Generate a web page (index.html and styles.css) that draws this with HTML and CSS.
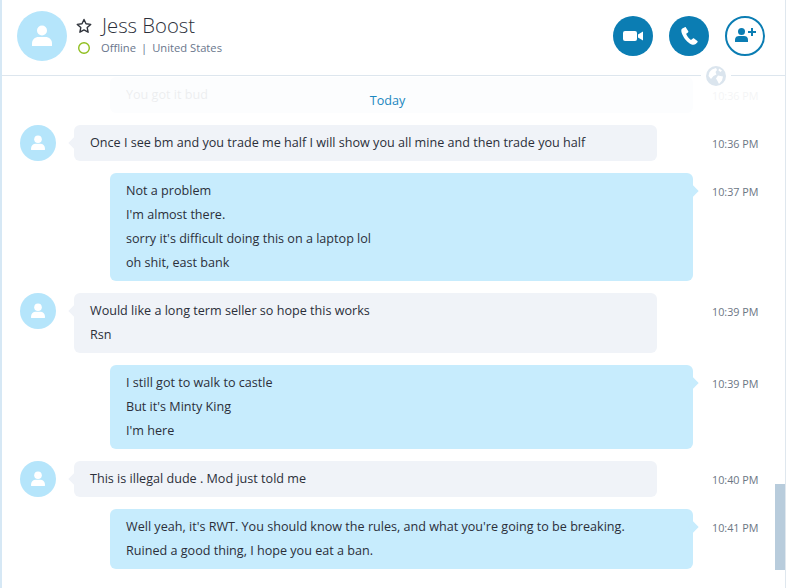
FILE: index.html
```html
<!DOCTYPE html>
<html lang="en">
<head>
    <meta charset="UTF-8">
    <meta name="viewport" content="width=device-width, initial-scale=1.0">
    <title>Jess Boost</title>
    <link rel="stylesheet" href="styles.css">
</head>
<body>
    <div class="window">
        <div class="top">
            <div class="bigAvatar">
                <svg width="26" height="26" viewBox="0 0 26 26"><circle cx="13" cy="7.500" r="5" fill="#fff"/><path d="M3 23v-2.500c0-4 3-6.500 6.500-6.500h7c3.500 0 6.500 2.500 6.500 6.500V23z" fill="#fff"/></svg>
            </div>
            <div class="who">
                <div class="nameLine">
                    <svg class="star" width="16" height="15" viewBox="0 0 16 15"><path d="M8 1.500l2 4.300 4.700.6-3.500 3.200.9 4.600L8 11.900l-4.100 2.300.9-4.600L1.300 6.400 6 5.800z" fill="none" stroke="#30343c" stroke-width="1.400" stroke-linejoin="round"/></svg>
                    <span class="name">Jess Boost</span>
                </div>
                <div class="statusLine">
                    <svg class="ring" width="12" height="12" viewBox="0 0 12 12"><circle cx="6" cy="6" r="5.300" fill="none" stroke="#8fbe1e" stroke-width="1.400"/></svg>
                    <span>Offline</span><span class="sep">|</span><span>United States</span>
                </div>
            </div>
            <div class="btns">
                <div class="btn">
                    <svg width="20" height="10" viewBox="0 0 20 10"><rect x="0" y="0" width="14" height="10" rx="2" fill="#fff"/><path d="M15 3.500L20 .5v9l-5-3z" fill="#fff"/></svg>
                </div>
                <div class="btn">
                    <svg width="20" height="20" viewBox="0 0 20 20"><path d="M5.800 1.200L3.300 2.400C1.900 3.200 2 5.500 3.200 8.200c1.900 4.300 5.400 8.400 8.800 10 1.900.9 3.500.8 4.700-.2l1.800-1.800c.3-.4.300-.9-.1-1.200l-3.300-2.500c-.4-.3-.8-.3-1.200 0l-1.500 1.200c-.3.2-.6.200-.9 0-1.800-1.300-3.300-3.300-4.200-5.400-.1-.3 0-.6.200-.8l1.500-1.100c.4-.3.500-.7.300-1.100L6.900 1.600c-.2-.5-.7-.6-1.100-.4z" fill="#fff"/></svg>
                </div>
                <div class="btn line">
                    <svg width="26" height="20" viewBox="0 0 26 20"><circle cx="9.500" cy="5.500" r="3.500" fill="#0b7db3"/><path d="M3 16v-2.500C3 11 5 10 7 10h5c2 0 4 1 4 3.500V16z" fill="#0b7db3"/><path d="M20 2v8M16 6h8" stroke="#0b7db3" stroke-width="2" fill="none"/></svg>
                </div>
            </div>
        </div>

        <div class="chat">
            <div class="today">Today</div>
            <div class="globe">
                <svg width="20" height="20" viewBox="0 0 20 20"><circle cx="10" cy="10" r="10" fill="#dbe5ee"/><path d="M6 3.500l4-1.500 1 2-1.500 2 1 2.500-3 1.500-2.500 3-2.500-3 1-4zM12 9.500l5 1-1 4-3 3.500-1.500-3-1.500-2.500zM13 2.500l3 2-1.500 1.500-2-1.500z" fill="#fff"/></svg>
            </div>

            <div class="row faded">
                <div class="bubble out">
                    <p>You got it bud</p>
                </div>
                <div class="time">10:36 PM</div>
            </div>

            <div class="row">
                <div class="avatar">
                    <svg width="18" height="18" viewBox="0 0 26 26"><circle cx="13" cy="7.500" r="5.500" fill="#fff"/><path d="M3 23v-2.500c0-4 3-6.500 6.500-6.500h7c3.500 0 6.500 2.500 6.500 6.500V23z" fill="#fff"/></svg>
                </div>
                <div class="bubble in">
                    <p>Once I see bm and you trade me half I will show you all mine and then trade you half</p>
                </div>
                <div class="time">10:36 PM</div>
            </div>

            <div class="row">
                <div class="bubble out">
                    <p>Not a problem</p>
                    <p>I'm almost there.</p>
                    <p>sorry it's difficult doing this on a laptop lol</p>
                    <p>oh shit, east bank</p>
                </div>
                <div class="time">10:37 PM</div>
            </div>

            <div class="row">
                <div class="avatar">
                    <svg width="18" height="18" viewBox="0 0 26 26"><circle cx="13" cy="7.500" r="5.500" fill="#fff"/><path d="M3 23v-2.500c0-4 3-6.500 6.500-6.500h7c3.500 0 6.500 2.500 6.500 6.500V23z" fill="#fff"/></svg>
                </div>
                <div class="bubble in">
                    <p>Would like a long term seller so hope this works</p>
                    <p>Rsn</p>
                </div>
                <div class="time">10:39 PM</div>
            </div>

            <div class="row">
                <div class="bubble out">
                    <p>I still got to walk to castle</p>
                    <p>But it's Minty King</p>
                    <p>I'm here</p>
                </div>
                <div class="time">10:39 PM</div>
            </div>

            <div class="row">
                <div class="avatar">
                    <svg width="18" height="18" viewBox="0 0 26 26"><circle cx="13" cy="7.500" r="5.500" fill="#fff"/><path d="M3 23v-2.500c0-4 3-6.500 6.500-6.500h7c3.500 0 6.500 2.500 6.500 6.500V23z" fill="#fff"/></svg>
                </div>
                <div class="bubble in">
                    <p>This is illegal dude . Mod just told me</p>
                </div>
                <div class="time">10:40 PM</div>
            </div>

            <div class="row">
                <div class="bubble out">
                    <p>Well yeah, it's RWT. You should know the rules, and what you're going to be breaking.</p>
                    <p>Ruined a good thing, I hope you eat a ban.</p>
                </div>
                <div class="time">10:41 PM</div>
            </div>

            <div class="thumb"></div>
        </div>
    </div>
</body>
</html>
```

FILE: styles.css
```css
*{
    padding:0;
    margin:0;
    box-sizing:border-box;
}
html,body{
    height:100%;
    background-color:#fff;
}
body{
    font-family:"Open Sans","Noto Sans",sans-serif;
    font-size:12.6px;
    color:#2b2f3a;
}
.window{
    width:786px;
    height:588px;
    border-left:2px solid #d6e8f5;
    border-right:1px solid #dfe7ee;
    overflow:hidden;
}

/* header */
.top{
    height:76px;
    display:flex;
    align-items:flex-start;
    border-bottom:1px solid #dde6ee;
    padding:10px 20px 0 15px;
}
.bigAvatar{
    width:50px;
    height:50px;
    margin-top:1px;
    border-radius:50%;
    background-color:#b5e5fb;
    display:flex;
    align-items:center;
    justify-content:center;
}
.who{
    margin-left:9px;
}
.nameLine{
    display:flex;
    align-items:center;
    height:30px;
}
.star{
    margin-right:10px;
}
.name{
    font-size:20.3px;
    font-weight:300;
    color:#2b2f3a;
}
.statusLine{
    display:flex;
    align-items:center;
    font-size:11.2px;
    color:#69768c;
}
.ring{
    margin-left:2px;
    margin-right:11px;
}
.sep{
    margin:0 5px;
}
.btns{
    display:flex;
    gap:16px;
    margin-left:auto;
    padding-top:6px;
}
.btn{
    width:40px;
    height:40px;
    border-radius:50%;
    background-color:#0b7db3;
    display:flex;
    align-items:center;
    justify-content:center;
}
.btn.line{
    background-color:#fff;
    border:2px solid #0b7db3;
}

/* messages */
.chat{
    position:relative;
    height:512px;
    padding-top:1px;
    display:flex;
    flex-direction:column;
    gap:12px;
}
.today{
    position:absolute;
    top:16px;
    left:0;
    right:12px;
    text-align:center;
    line-height:18px;
    color:#1b87c0;
    z-index:2;
}
.globe{
    position:absolute;
    top:-10px;
    right:54px;
    width:30px;
    height:20px;
    padding:0 5px;
    background-color:#fff;
}
.row{
    display:flex;
    align-items:flex-start;
    padding-left:108px;
}
.row:has(.avatar){
    padding-left:18px;
}
.avatar{
    width:36px;
    height:36px;
    border-radius:50%;
    background-color:#b5e5fb;
    display:flex;
    align-items:center;
    justify-content:center;
    margin-right:18px;
}
.bubble{
    position:relative;
    width:583px;
    padding:6px 16px;
    border-radius:6px;
}
.bubble p{
    line-height:24px;
}
.bubble::after{
    content:"";
    position:absolute;
    top:14px;
    width:8px;
    height:8px;
    background-color:inherit;
    transform:rotate(45deg);
}
.in{
    background-color:#f0f3f8;
}
.in::after{
    left:-4px;
}
.out{
    background-color:#c7ecfd;
}
.out::after{
    right:-4px;
}
.time{
    padding-top:7px;
    line-height:24px;
    font-size:10.8px;
    color:#6c7684;
    margin-left:19px;
}
.in + .time{
    margin-left:55px;
}
.faded .bubble{
    background-color:#fcfdfe;
}
.faded .bubble::after{
    display:none;
}
.faded p,
.faded .time{
    opacity:.07;
}
.thumb{
    position:absolute;
    right:0;
    top:408px;
    width:10px;
    height:86px;
    background-color:#b8ccdc;
}
```
